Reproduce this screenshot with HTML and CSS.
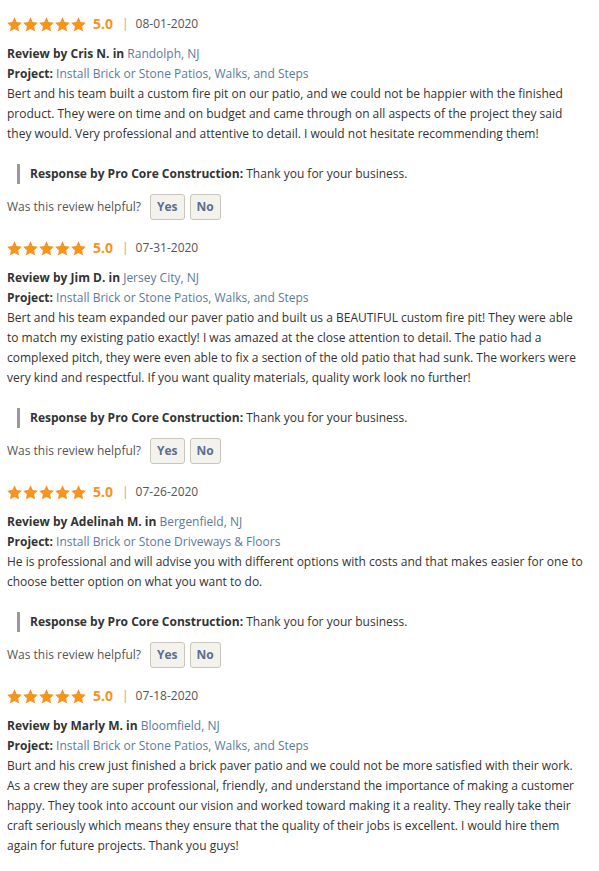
FILE: index.html
```html
<!DOCTYPE html>
<html>
<head>
<meta charset="utf-8">
<link rel="stylesheet" href="styles.css">
</head>
<body>
<svg width="0" height="0" class="defs">
  <defs>
    <symbol id="star" viewBox="0.6 0.6 22.8 22.2">
      <path d="M12 0.8l3.4 7.1 7.8 1-5.7 5.4 1.5 7.8L12 18.4l-7 3.7 1.5-7.8L0.8 8.9l7.8-1z" fill="#f7931e"/>
    </symbol>
  </defs>
</svg>
<div class="reviews">

  <div class="review">
    <div class="rating">
      <span class="stars"><svg><use href="#star"/></svg><svg><use href="#star"/></svg><svg><use href="#star"/></svg><svg><use href="#star"/></svg><svg><use href="#star"/></svg></span>
      <span class="score">5.0</span><span class="sep">|</span><span class="date">08-01-2020</span>
    </div>
    <div class="meta"><b>Review by Cris N. in</b> <a class="link">Randolph, NJ</a></div>
    <div class="meta"><b>Project:</b> <a class="link">Install Brick or Stone Patios, Walks, and Steps</a></div>
    <p class="body">Bert and his team built a custom fire pit on our patio, and we could not be happier with the finished product. They were on time and on budget and came through on all aspects of the project they said they would. Very professional and attentive to detail. I would not hesitate recommending them!</p>
    <div class="response"><b>Response by Pro Core Construction:</b> Thank you for your business.</div>
    <div class="helpful"><span>Was this review helpful?</span><button class="btn">Yes</button><button class="btn">No</button></div>
  </div>

  <div class="review">
    <div class="rating">
      <span class="stars"><svg><use href="#star"/></svg><svg><use href="#star"/></svg><svg><use href="#star"/></svg><svg><use href="#star"/></svg><svg><use href="#star"/></svg></span>
      <span class="score">5.0</span><span class="sep">|</span><span class="date">07-31-2020</span>
    </div>
    <div class="meta"><b>Review by Jim D. in</b> <a class="link">Jersey City, NJ</a></div>
    <div class="meta"><b>Project:</b> <a class="link">Install Brick or Stone Patios, Walks, and Steps</a></div>
    <p class="body">Bert and his team expanded our paver patio and built us a BEAUTIFUL custom fire pit! They were able to match my existing patio exactly! I was amazed at the close attention to detail. The patio had a complexed pitch, they were even able to fix a section of the old patio that had sunk. The workers were very kind and respectful. If you want quality materials, quality work look no further!</p>
    <div class="response"><b>Response by Pro Core Construction:</b> Thank you for your business.</div>
    <div class="helpful"><span>Was this review helpful?</span><button class="btn">Yes</button><button class="btn">No</button></div>
  </div>

  <div class="review">
    <div class="rating">
      <span class="stars"><svg><use href="#star"/></svg><svg><use href="#star"/></svg><svg><use href="#star"/></svg><svg><use href="#star"/></svg><svg><use href="#star"/></svg></span>
      <span class="score">5.0</span><span class="sep">|</span><span class="date">07-26-2020</span>
    </div>
    <div class="meta"><b>Review by Adelinah M. in</b> <a class="link">Bergenfield, NJ</a></div>
    <div class="meta"><b>Project:</b> <a class="link">Install Brick or Stone Driveways &amp; Floors</a></div>
    <p class="body">He is professional and will advise you with different options with costs and that makes easier for one to choose better option on what you want to do.</p>
    <div class="response"><b>Response by Pro Core Construction:</b> Thank you for your business.</div>
    <div class="helpful"><span>Was this review helpful?</span><button class="btn">Yes</button><button class="btn">No</button></div>
  </div>

  <div class="review">
    <div class="rating">
      <span class="stars"><svg><use href="#star"/></svg><svg><use href="#star"/></svg><svg><use href="#star"/></svg><svg><use href="#star"/></svg><svg><use href="#star"/></svg></span>
      <span class="score">5.0</span><span class="sep">|</span><span class="date">07-18-2020</span>
    </div>
    <div class="meta"><b>Review by Marly M. in</b> <a class="link">Bloomfield, NJ</a></div>
    <div class="meta"><b>Project:</b> <a class="link">Install Brick or Stone Patios, Walks, and Steps</a></div>
    <p class="body">Burt and his crew just finished a brick paver patio and we could not be more satisfied with their work. As a crew they are super professional, friendly, and understand the importance of making a customer happy. They took into account our vision and worked toward making it a reality. They really take their craft seriously which means they ensure that the quality of their jobs is excellent. I would hire them again for future projects. Thank you guys!</p>
  </div>

</div>
</body>
</html>
```
FILE: styles.css
```css
html, body {
  margin: 0;
  padding: 0;
  background: #ffffff;
}
body {
  font-family: "Open Sans", "DejaVu Sans", sans-serif;
  font-size: 12px;
  line-height: 20px;
  color: #333333;
}
.defs {
  position: absolute;
  width: 0;
  height: 0;
}
.reviews {
  padding: 14px 7px 0 7px;
  width: 579px;
}
.review {
  margin-bottom: 18px;
}
.rating {
  display: flex;
  align-items: center;
  height: 20px;
  margin-bottom: 10px;
}
.stars {
  display: flex;
  gap: 1px;
  margin-right: 7px;
}
.stars svg {
  width: 15px;
  height: 15px;
}
.score {
  color: #f7931e;
  font-weight: 700;
  font-size: 14px;
}
.sep {
  color: #c8a27c;
  margin: 0 7px 0 9px;
}
.date {
  color: #555555;
  font-size: 12px;
}
.meta b {
  font-weight: 700;
}
.link {
  color: #5b7a9c;
  text-decoration: none;
}
.body {
  margin: 0;
}
.response {
  margin: 20px 0 0 10px;
  padding-left: 10px;
  border-left: 3px solid #999999;
}
.helpful {
  display: flex;
  align-items: center;
  margin-top: 10px;
  color: #555555;
}
.helpful span {
  margin-right: 9px;
}
.btn {
  font-family: "Open Sans", "DejaVu Sans", sans-serif;
  font-size: 12px;
  font-weight: 700;
  color: #5a6f8e;
  background: #f4f2ec;
  border: 1px solid #c9c5bb;
  border-radius: 3px;
  height: 26px;
  padding: 0 6px;
  margin-right: 5px;
  line-height: 24px;
}
```
